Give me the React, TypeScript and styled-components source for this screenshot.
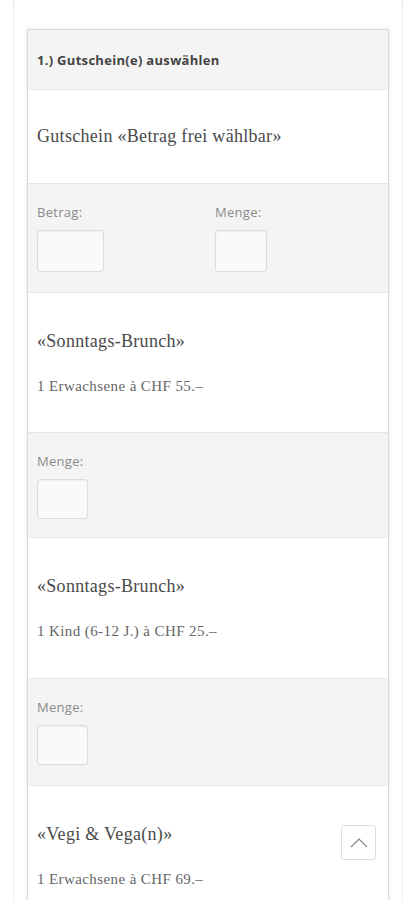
import styled, { createGlobalStyle } from "styled-components";

const GlobalStyle = createGlobalStyle`
  html, body {
    margin: 0;
    padding: 0;
    background: #ffffff;
  }
  * { box-sizing: border-box; }
`;

const Page = styled.div`
  margin: 0 12px 0 13px;
  min-height: 900px;
  border-left: 1px dotted #dcdcdc;
  border-right: 1px dotted #dcdcdc;
  padding: 29px 13px 0 13px;
`;

const Card = styled.div`
  border: 1px solid #dadada;
  box-shadow: 0 0 3px rgba(0, 0, 0, 0.12);
  background: #fff;
`;

const Header = styled.div`
  height: 60px;
  display: flex;
  align-items: center;
  padding: 0 9px;
  background: #f4f4f4;
  border-bottom: 1px solid #e6e6e6;
  font-family: "Open Sans", "Liberation Sans", sans-serif;
  font-weight: 700;
  font-size: 13px;
  letter-spacing: 0.3px;
  color: #444;
`;

const Product = styled.div<{ $h: number }>`
  height: ${(p) => p.$h}px;
  display: flex;
  flex-direction: column;
  justify-content: center;
  gap: 26px;
  padding: 0 9px;
  border-bottom: 1px solid #e6e6e6;
`;

const Title = styled.div`
  font-family: "Liberation Serif", "DejaVu Serif", serif;
  font-size: 18px;
  color: #4a4a4a;
  letter-spacing: 0.3px;
`;

const Sub = styled.div`
  font-family: "Liberation Serif", "DejaVu Serif", serif;
  font-size: 15px;
  letter-spacing: 0.4px;
  color: #666;
`;

const Fields = styled.div<{ $h: number }>`
  height: ${(p) => p.$h}px;
  background: #f4f4f4;
  border-bottom: 1px solid #e6e6e6;
  padding: 20px 9px 0 9px;
  display: grid;
  grid-template-columns: 178px 1fr;
  align-content: start;
`;

const Field = styled.div`
  display: flex;
  flex-direction: column;
  gap: 9px;
`;

const Label = styled.label`
  font-family: "Open Sans", "Liberation Sans", sans-serif;
  font-size: 13px;
  letter-spacing: 0.3px;
  color: #8a8a8a;
  line-height: 17px;
`;

const Input = styled.input<{ $w: number; $hgt?: number }>`
  width: ${(p) => p.$w}px;
  height: ${(p) => p.$hgt ?? 42}px;
  border: 1px solid #dcdcdc;
  border-radius: 3px;
  background: #fafafa;
  box-shadow: inset 0 1px 2px rgba(0, 0, 0, 0.06);
  outline: none;
`;

const TopButton = styled.button`
  position: fixed;
  right: 39px;
  bottom: 40px;
  width: 35px;
  height: 35px;
  padding: 0;
  border: 1px solid #dedede;
  border-radius: 3px;
  background: #fff;
  display: flex;
  align-items: center;
  justify-content: center;
`;

export default function App() {
  return (
    <>
      <GlobalStyle />
      <Page>
        <Card>
          <Header>1.) Gutschein(e) auswählen</Header>
          <Product $h={94}>
            <Title>Gutschein «Betrag frei wählbar»</Title>
          </Product>
          <Fields $h={109}>
            <Field>
              <Label>Betrag:</Label>
              <Input $w={67} />
            </Field>
            <Field>
              <Label>Menge:</Label>
              <Input $w={52} />
            </Field>
          </Fields>
          <Product $h={140}>
            <Title>«Sonntags-Brunch»</Title>
            <Sub>1 Erwachsene à CHF 55.–</Sub>
          </Product>
          <Fields $h={105}>
            <Field>
              <Label>Menge:</Label>
              <Input $w={51} $hgt={40} />
            </Field>
          </Fields>
          <Product $h={141}>
            <Title>«Sonntags-Brunch»</Title>
            <Sub>1 Kind (6-12 J.) à CHF 25.–</Sub>
          </Product>
          <Fields $h={107}>
            <Field>
              <Label>Menge:</Label>
              <Input $w={51} $hgt={40} />
            </Field>
          </Fields>
          <Product $h={141}>
            <Title>«Vegi &amp; Vega(n)»</Title>
            <Sub>1 Erwachsene à CHF 69.–</Sub>
          </Product>
        </Card>
      </Page>
      <TopButton aria-label="Nach oben">
        <svg width="20" height="12" viewBox="0 0 20 12">
          <path d="M2 10 L10 2 L18 10" fill="none" stroke="#888" strokeWidth="1.2" />
        </svg>
      </TopButton>
    </>
  );
}
